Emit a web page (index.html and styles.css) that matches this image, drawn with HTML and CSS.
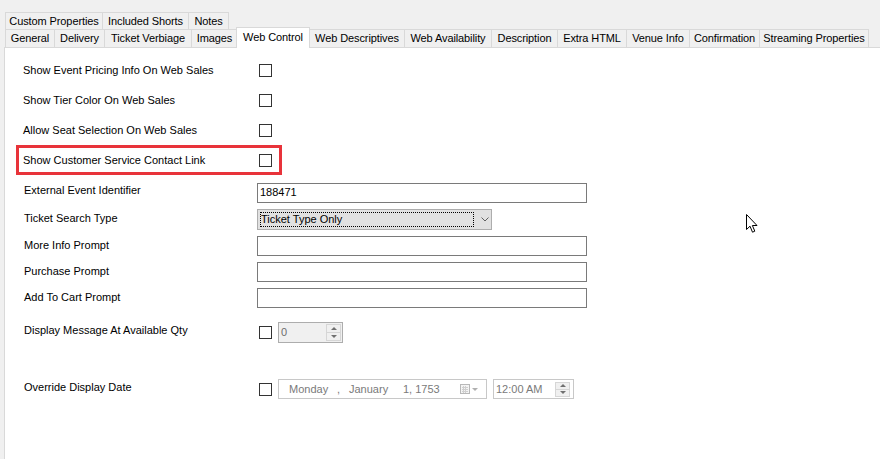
FILE: index.html
```html
<!DOCTYPE html>
<html lang="en">
<head>
    <meta charset="UTF-8">
    <title>Event Settings - Web Control</title>
    <link rel="stylesheet" href="styles.css">
</head>
<body>
    <div class="tabs">
        <div class="tab-row">
            <div class="tab" style="width: 97px">Custom Properties</div>
            <div class="tab" style="width: 86px">Included Shorts</div>
            <div class="tab last" style="width: 41px">Notes</div>
        </div>
        <div class="tab-row">
            <div class="tab" style="width: 49px">General</div>
            <div class="tab" style="width: 50px">Delivery</div>
            <div class="tab" style="width: 87px">Ticket Verbiage</div>
            <div class="tab" style="width: 46px">Images</div>
            <div class="tab selected" style="width: 74px">Web Control</div>
            <div class="tab" style="width: 95px">Web Descriptives</div>
            <div class="tab" style="width: 87px">Web Availability</div>
            <div class="tab" style="width: 66px">Description</div>
            <div class="tab" style="width: 69px">Extra HTML</div>
            <div class="tab" style="width: 63px">Venue Info</div>
            <div class="tab" style="width: 70px">Confirmation</div>
            <div class="tab last" style="width: 110px">Streaming Properties</div>
        </div>
    </div>

    <div class="panel">
        <div class="checks">
            <div class="check-row">
                <span class="label">Show Event Pricing Info On Web Sales</span>
                <span class="checkbox"></span>
            </div>
            <div class="check-row">
                <span class="label">Show Tier Color On Web Sales</span>
                <span class="checkbox"></span>
            </div>
            <div class="check-row">
                <span class="label">Allow Seat Selection On Web Sales</span>
                <span class="checkbox"></span>
            </div>
            <div class="check-row flagged">
                <span class="label">Show Customer Service Contact Link</span>
                <span class="checkbox"></span>
            </div>
        </div>

        <div class="fields">
            <div class="field first">
                <span class="label">External Event Identifier</span>
                <div class="textbox">188471</div>
            </div>
            <div class="field">
                <span class="label">Ticket Search Type</span>
                <div class="combo">
                    <span class="focus">Ticket Type Only</span>
                    <svg class="chevron" width="8" height="5" viewBox="0 0 8 5">
                        <path d="M0.5 0.5 L4 4 L7.5 0.5" fill="none" stroke="#606060" stroke-width="1"/>
                    </svg>
                </div>
            </div>
            <div class="field">
                <span class="label">More Info Prompt</span>
                <div class="textbox"></div>
            </div>
            <div class="field">
                <span class="label">Purchase Prompt</span>
                <div class="textbox"></div>
            </div>
            <div class="field">
                <span class="label">Add To Cart Prompt</span>
                <div class="textbox"></div>
            </div>
        </div>

        <div class="field qty-row">
            <span class="label">Display Message At Available Qty</span>
            <span class="checkbox"></span>
            <div class="updown">
                <span class="value">0</span>
                <div class="spin">
                    <span class="spin-btn"><i class="arrow up"></i></span>
                    <span class="spin-btn"><i class="arrow down"></i></span>
                </div>
            </div>
        </div>

        <div class="field date-row">
            <span class="label">Override Display Date</span>
            <span class="checkbox"></span>
            <div class="datepicker">
                <span class="seg" style="width: 48px">Monday</span>
                <span class="seg" style="width: 12px">,</span>
                <span class="seg" style="width: 54px">January</span>
                <span class="seg">1, 1753</span>
                <svg class="cal" width="20" height="10" viewBox="0 0 20 10">
                    <rect x="0.5" y="0.5" width="9" height="9" fill="#f4f4f4" stroke="#b8b8b8"/>
                    <path d="M2 3.5 H8 M2 5.5 H8 M2 7.5 H8 M3.5 2 V9 M5.5 2 V9" stroke="#cfcfcf" stroke-width="1"/>
                    <path d="M12 4 L18 4 L15 7 Z" fill="#b0b0b0"/>
                </svg>
            </div>
            <div class="timepicker">
                <span class="value">12:00 AM</span>
                <div class="spin">
                    <span class="spin-btn"><i class="arrow up"></i></span>
                    <span class="spin-btn"><i class="arrow down"></i></span>
                </div>
            </div>
        </div>
    </div>

    <svg class="cursor" width="13" height="20" viewBox="0 0 13 20">
        <path d="M0.5 0.5 L0.5 15.5 L4 12.2 L6.5 18.2 L8.8 17.2 L6.4 11.5 L11 11.5 Z" fill="#fff" stroke="#000" stroke-width="1" stroke-linejoin="miter"/>
    </svg>
</body>
</html>
```

FILE: styles.css
```css
body {
    margin: 0;
    background: #f0f0f0;
    font-family: "Liberation Sans", Arial, sans-serif;
    font-size: 11px;
    color: #000;
    height: 459px;
    overflow: hidden;
}
.tabs {
    padding: 12px 0 0 5px;
}
.tab-row {
    display: flex;
    height: 17px;
}
.tab-row + .tab-row {
    height: 18px;
}
.tab {
    box-sizing: border-box;
    flex-shrink: 0;
    height: 100%;
    border: 1px solid #d9d9d9;
    border-right: none;
    border-bottom: none;
    background: #f0f0f0;
    text-align: center;
    line-height: 16px;
    letter-spacing: -0.1px;
    white-space: nowrap;
}
.tab.last {
    border-right: 1px solid #d9d9d9;
}
.tab.selected {
    position: relative;
    z-index: 1;
    height: 21px;
    margin: -2px -1px 0 -1px;
    border-right: 1px solid #d9d9d9;
    background: #fff;
    line-height: 19px;
}
.panel {
    margin-left: 4px;
    border-left: 1px solid #d9d9d9;
    border-top: 1px solid #d9d9d9;
    background: #fff;
    height: 412px;
    padding: 7px 0 0 18px;
    box-sizing: border-box;
}
.checks {
    display: flex;
    flex-direction: column;
}
.check-row {
    display: flex;
    align-items: center;
    height: 30px;
}
.check-row .label {
    width: 236px;
}
.check-row.flagged {
    box-sizing: border-box;
    width: fit-content;
    margin-left: -7px;
    padding: 0 7px 0 4px;
    border: 3px solid #e8333a;
}
.checkbox {
    display: inline-block;
    box-sizing: border-box;
    width: 13px;
    height: 13px;
    border: 1px solid #333;
    background: #fff;
}
.fields {
    display: flex;
    flex-direction: column;
    gap: 6px;
    margin-top: 8px;
}
.field {
    display: flex;
    align-items: flex-start;
    padding-left: 1px;
}
.field .label {
    width: 233px;
    padding-top: 3px;
    line-height: 13px;
}
.field.first .label {
    padding-top: 1px;
}
.textbox {
    box-sizing: border-box;
    width: 330px;
    height: 20px;
    border: 1px solid #7a7a7a;
    background: #fff;
    padding: 0 2px;
    line-height: 17px;
}
.combo {
    box-sizing: border-box;
    display: flex;
    align-items: center;
    width: 235px;
    height: 21px;
    border: 1px solid #adadad;
    background: #e1e1e1;
    padding: 0 0 0 2px;
}
.focus {
    box-sizing: border-box;
    width: 214px;
    height: 15px;
    border: 1px dotted #000;
    line-height: 13px;
}
.chevron {
    margin-left: 7px;
}
.qty-row {
    margin-top: 14px;
    align-items: center;
    height: 20px;
}
.date-row {
    margin-top: 37px;
    align-items: center;
    height: 20px;
}
.qty-row .label,
.date-row .label {
    padding-top: 0;
    margin-top: -3px;
}
.qty-row .checkbox,
.date-row .checkbox {
    margin: 0 6px 0 2px;
}
.updown {
    box-sizing: border-box;
    display: flex;
    align-items: center;
    width: 65px;
    height: 21px;
    border: 1px solid #adadad;
    background: #f0f0f0;
    color: #6d6d6d;
    padding-left: 2px;
}
.updown .value,
.timepicker .value {
    flex: 1;
}
.spin {
    display: flex;
    flex-direction: column;
    width: 15px;
    height: 17px;
    margin-right: 1px;
}
.spin-btn {
    flex: 1;
    display: flex;
    align-items: center;
    justify-content: center;
    border: 1px solid #d6d6d6;
    background: #f0f0f0;
}
.spin-btn + .spin-btn {
    border-top: none;
}
.arrow {
    width: 0;
    height: 0;
    border-left: 3px solid transparent;
    border-right: 3px solid transparent;
}
.arrow.up {
    border-bottom: 3px solid #707070;
}
.arrow.down {
    border-top: 3px solid #707070;
}
.datepicker {
    box-sizing: border-box;
    display: flex;
    align-items: center;
    width: 209px;
    height: 20px;
    border: 1px solid #c8c8c8;
    background: #fff;
    color: #7a7a7a;
    padding-left: 10px;
}
.datepicker .seg {
    white-space: nowrap;
}
.cal {
    margin-left: auto;
    margin-right: 6px;
}
.timepicker {
    box-sizing: border-box;
    display: flex;
    align-items: center;
    width: 81px;
    height: 20px;
    margin-left: 6px;
    border: 1px solid #c8c8c8;
    background: #fff;
    color: #7a7a7a;
    padding-left: 2px;
}
.timepicker .spin {
    height: 15px;
    margin-right: 3px;
}
.cursor {
    position: absolute;
    left: 746px;
    top: 214px;
}
```
